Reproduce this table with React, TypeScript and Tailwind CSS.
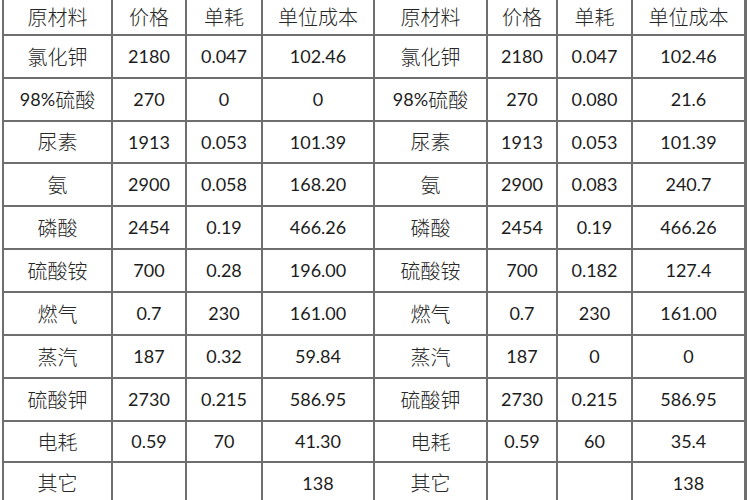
const header = ['原材料', '价格', '单耗', '单位成本', '原材料', '价格', '单耗', '单位成本']

const rows: string[][] = [
  ['氯化钾', '2180', '0.047', '102.46', '氯化钾', '2180', '0.047', '102.46'],
  ['98%硫酸', '270', '0', '0', '98%硫酸', '270', '0.080', '21.6'],
  ['尿素', '1913', '0.053', '101.39', '尿素', '1913', '0.053', '101.39'],
  ['氨', '2900', '0.058', '168.20', '氨', '2900', '0.083', '240.7'],
  ['磷酸', '2454', '0.19', '466.26', '磷酸', '2454', '0.19', '466.26'],
  ['硫酸铵', '700', '0.28', '196.00', '硫酸铵', '700', '0.182', '127.4'],
  ['燃气', '0.7', '230', '161.00', '燃气', '0.7', '230', '161.00'],
  ['蒸汽', '187', '0.32', '59.84', '蒸汽', '187', '0', '0'],
  ['硫酸钾', '2730', '0.215', '586.95', '硫酸钾', '2730', '0.215', '586.95'],
  ['电耗', '0.59', '70', '41.30', '电耗', '0.59', '60', '35.4'],
  ['其它', '', '', '138', '其它', '', '', '138'],
]

function Cell({ text }: { text: string }) {
  // split leading latin part (e.g. "98%") from the chinese part
  const m = text.match(/^([0-9.%]*)(.*)$/)
  const latin = m ? m[1] : ''
  const cjk = m ? m[2] : text
  return (
    <div className="bg-white flex items-center justify-center whitespace-nowrap">
      {latin && <span className="text-[18px] text-[#1c1c1c]">{latin}</span>}
      {cjk && <span className="text-[20px] font-light text-[#262626]">{cjk}</span>}
    </div>
  )
}

export default function App() {
  return (
    <div
      className="w-[750px] h-[500px] overflow-hidden bg-white"
      style={{ fontFamily: 'Lato, "Noto Sans CJK SC", sans-serif' }}
    >
      <div className="ml-[2px] w-[745px] px-[2px] bg-[#6e6e6e] grid grid-cols-[107px_72px_74px_110px_111px_68px_73px_111px] grid-rows-[34px_41px_41px_40px_41px_41px_41px_41px_41px_41px_39px_40px] gap-[2px]">
        {header.map((h, i) => (
          <Cell key={'h' + i} text={h} />
        ))}
        {rows.map((r, ri) => r.map((c, ci) => <Cell key={ri + '-' + ci} text={c} />))}
      </div>
    </div>
  )
}
